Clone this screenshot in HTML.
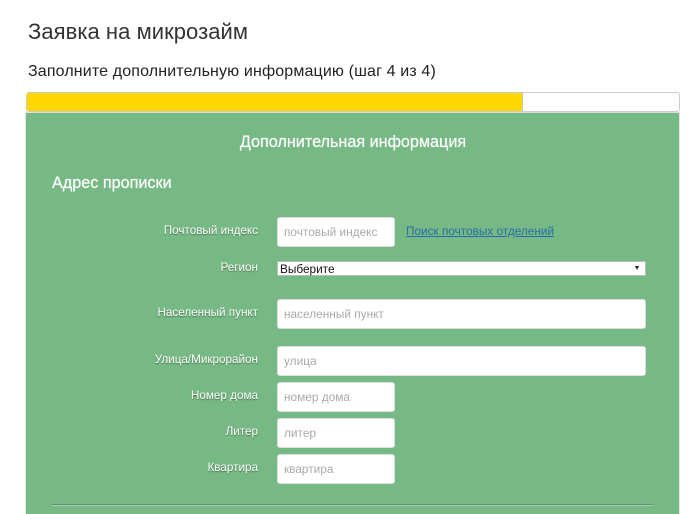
<!DOCTYPE html>
<html lang="ru">
<head>
<meta charset="utf-8">
<title>Заявка на микрозайм</title>
<style>
html,body{margin:0;padding:0;background:#fff;width:700px;height:514px;overflow:hidden}
body{position:relative;font-family:"Liberation Sans",Arial,sans-serif;color:#333}
.a{position:absolute;white-space:nowrap}
.h1{left:28px;top:20px;font-size:22px;letter-spacing:.05px;line-height:24px;color:#333}
.h2{left:28px;top:61px;font-size:16px;letter-spacing:.14px;line-height:21px;color:#222}
.bar{left:26px;top:92px;width:652px;height:18px;border:1px solid #ccc;border-radius:3px;background:#fff;overflow:hidden}
.fill{position:absolute;left:0;top:0;height:18px;width:495px;background:#ffd700;border-right:1px solid #c8c8a0}
.panel{left:25px;top:112px;width:655px;height:402px;background:#76b984;border-left:1px solid #e4e4e4;border-right:1px solid #e4e4e4;border-top:1px solid #ddd;box-sizing:border-box}
.t{left:26px;width:654px;top:132px;text-align:center;font-size:16.2px;line-height:20px;color:#fff;text-shadow:0 0 1px rgba(255,255,255,.7)}
.s{left:52px;top:173px;font-size:16.2px;line-height:20px;color:#fff;text-shadow:0 0 1px rgba(255,255,255,.7)}
.l{right:442px;font-size:11.7px;line-height:16px;color:#fff;text-shadow:0 1px 1px rgba(50,80,50,.7)}
.i{left:277px;height:30px;box-sizing:border-box;background:#fff;border:1px solid #ddd;border-radius:3px;padding-left:6px;font-size:11.85px;line-height:28px;color:#a9a9a9}
.w{width:118px}
.f{width:369px}
.sel{left:277px;top:261px;width:369px;height:15px;box-sizing:border-box;background:#fff;border:1px solid #bbb;font-size:11.8px;line-height:14px;color:#111;padding-left:2px}
.arrow{position:absolute;right:6px;top:4px;width:0;height:0;border-left:2px solid transparent;border-right:2px solid transparent;border-top:4px solid #222}
.link{left:406px;top:223px;font-size:11.8px;line-height:16px;color:#2c6ca8;text-decoration:underline}
.hr{left:52px;top:504px;width:601px;height:1px;background:#5a9167;border-bottom:1px solid #a5d0ae}
</style>
</head>
<body>
<div class="a h1">Заявка на микрозайм</div>
<div class="a h2">Заполните дополнительную информацию (шаг 4 из 4)</div>
<div class="a bar"><div class="fill"></div></div>
<div class="a panel"></div>
<div class="a t">Дополнительная информация</div>
<div class="a s">Адрес прописки</div>

<div class="a l" style="top:223px">Почтовый индекс</div>
<div class="a i w" style="top:217px">почтовый индекс</div>
<a class="a link">Поиск почтовых отделений</a>

<div class="a l" style="top:260px">Регион</div>
<div class="a sel">Выберите<span class="arrow"></span></div>

<div class="a l" style="top:305px">Населенный пункт</div>
<div class="a i f" style="top:299px">населенный пункт</div>

<div class="a l" style="top:352px">Улица/Микрорайон</div>
<div class="a i f" style="top:346px">улица</div>

<div class="a l" style="top:388px">Номер дома</div>
<div class="a i w" style="top:382px">номер дома</div>

<div class="a l" style="top:424px">Литер</div>
<div class="a i w" style="top:418px">литер</div>

<div class="a l" style="top:460px">Квартира</div>
<div class="a i w" style="top:454px">квартира</div>

<div class="a hr"></div>
</body>
</html>
